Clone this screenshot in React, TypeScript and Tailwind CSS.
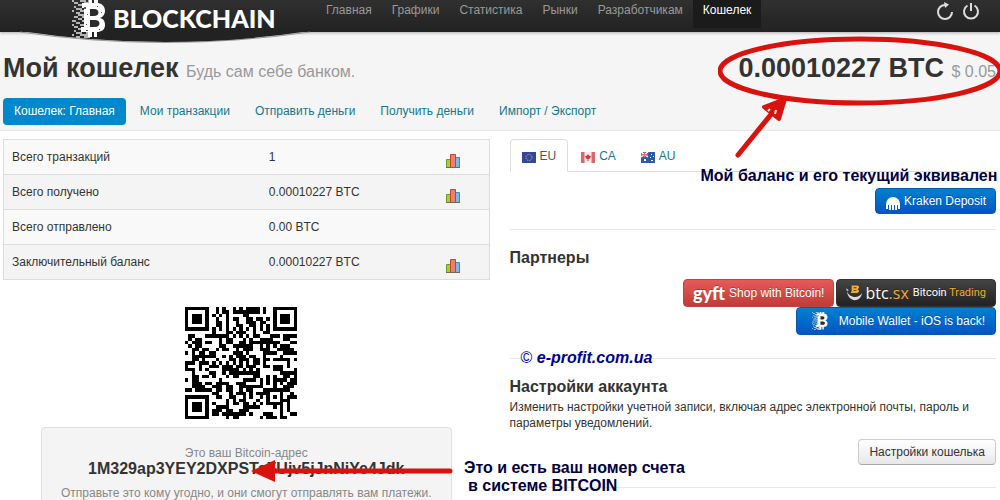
import type { ReactNode } from 'react'
import { clsx } from 'clsx'

const navItems = ['Главная', 'Графики', 'Статистика', 'Рынки', 'Разработчикам', 'Кошелек']
const walletTabs = ['Кошелек: Главная', 'Мои транзакции', 'Отправить деньги', 'Получить деньги', 'Импорт / Экспорт']

const summaryRows = [
  { label: 'Всего транзакций', value: '1', chart: true },
  { label: 'Всего получено', value: '0.00010227 BTC', chart: true },
  { label: 'Всего отправлено', value: '0.00 BTC', chart: false },
  { label: 'Заключительный баланс', value: '0.00010227 BTC', chart: true },
]

const QR_SIZE = 33

function inFinder(x: number, y: number, left: number, top: number) {
  return x >= left - 1 && x <= left + 7 && y >= top - 1 && y <= top + 7
}

function ring(x: number, y: number, cx: number, cy: number) {
  return Math.max(Math.abs(x - cx), Math.abs(y - cy))
}

function isDark(x: number, y: number) {
  const corners = [[0, 0], [QR_SIZE - 7, 0], [0, QR_SIZE - 7]]
  for (const [left, top] of corners) {
    if (inFinder(x, y, left, top)) {
      const r = ring(x, y, left + 3, top + 3)
      return r !== 2 && r !== 4
    }
  }
  const align = ring(x, y, 26, 26)
  if (align <= 2) return align !== 1
  if (x === 6 || y === 6) return (x + y) % 2 === 0
  let n = (x * 374761393 + y * 668265263 + 91) | 0
  n = Math.imul(n ^ (n >>> 13), 1274126177)
  return ((n ^ (n >>> 16)) & 255) < 132
}

function QrCode() {
  let d = ''
  for (let y = 0; y < QR_SIZE; y++) {
    for (let x = 0; x < QR_SIZE; x++) {
      if (isDark(x, y)) d += `M${x} ${y}h1v1h-1z`
    }
  }
  return (
    <svg viewBox="0 0 33 33" className="mx-auto h-28 w-28" shapeRendering="crispEdges" role="img" aria-label="QR">
      <path d={d} fill="#000" />
    </svg>
  )
}

function PixelB({ className }: { className?: string }) {
  const dots = []
  for (let y = 0; y < 19; y++) {
    for (let x = 0; x < 9; x++) {
      const n = Math.imul(x * 7919 + y * 104729 + 13, 2654435761) >>> 16
      if ((n & 15) < 5 + x) dots.push(`M${x * 2} ${y * 2}h2v2h-2z`)
    }
  }
  return (
    <svg viewBox="0 0 34 38" className={className} aria-hidden="true">
      <path d={dots.join('')} fill="#d8d8d8" opacity=".8" />
      <path d="M10 3h7V0h3v3h2V0h4v3c5 1 7 4 7 8 0 3-2 6-5 7 4 1 5 4 5 7 0 5-4 7-8 7v5h-3v-5h-2v5h-4v-5H9v-5h3V8h-2z" fill="#fff" />
      <path d="M18 9h4c6 0 6 7 0 7h-4zM18 20h5c6 0 6 7 0 7h-5z" fill="#2b2b2b" />
      <path d="M12 7h2v2h-2zM29 12h1v1h-1zM14 30h2v1h-2zM27 29h1v1h-1zM15 14h1v1h-1zM14 24h1v1h-1zM25 6h1v1h-1z" fill="#555" />
    </svg>
  )
}

function ChartIcon() {
  return (
    <svg viewBox="0 0 14 14" className="h-[14px] w-[14px]" aria-hidden="true">
      <path d="M.5 5.5h4v8h-4z" fill="#a6ce39" stroke="#6f9a1c" />
      <path d="M9.5 3.5h4v10h-4z" fill="#7db8e8" stroke="#4a86bd" />
      <path d="M4.5.5h5v13h-5z" fill="#ee7f68" stroke="#bf4433" />
      <path d="M0 13h14v1H0z" fill="#776655" />
    </svg>
  )
}

function Flag({ code }: { code: string }) {
  return (
    <svg viewBox="0 0 14 11" className="mt-[3px] h-[11px] w-[14px]" aria-hidden="true">
      {code === 'EU' && (
        <>
          <path d="M0 0h14v11H0z" fill="#33459c" />
          <circle cx="7" cy="5.5" r="3" fill="none" stroke="#c8c46a" strokeDasharray="1 .9" />
        </>
      )}
      {code === 'CA' && (
        <>
          <path d="M0 0h14v11H0z" fill="#f3eeee" />
          <path d="M0 0h3.5v11H0zM10.5 0H14v11h-3.5z" fill="#d9686a" />
          <path d="M7 2l1 1.5L10 4 9 6.5 7.5 7v2h-1V7L5 6.5 4 4l2-.5z" fill="#d4383a" />
        </>
      )}
      {code === 'AU' && (
        <>
          <path d="M0 0h14v11H0z" fill="#2c5aa8" />
          <path d="M0 0l7 5M7 0L0 5" stroke="#fff" strokeWidth="1.5" />
          <path d="M3.5 0v5.5M0 2.8h7" stroke="#e46a6a" strokeWidth="1.2" />
          <path d="M3 7h2v2H3zM10 2h1v1h-1zM12 4h1v1h-1zM9 5h1v1H9zM10 8h2v1h-2z" fill="#fff" />
        </>
      )}
    </svg>
  )
}

function PartnerButton({ className, children }: { className: string; children: ReactNode }) {
  return (
    <button type="button" className={clsx('flex items-center whitespace-nowrap rounded border text-[12px] text-white [text-shadow:0_-1px_0_rgba(0,0,0,0.25)]', className)}>
      {children}
    </button>
  )
}

function Header() {
  return (
    <header className="relative z-10 h-8 bg-gradient-to-b from-[#303030] to-[#222] shadow-[0_1px_3px_rgba(0,0,0,0.3)]">
      <svg viewBox="0 0 290 13" className="absolute left-5 top-[31px] h-[13px] w-[290px]" aria-hidden="true">
        <path d="M0 1Q145 22 290 1" fill="none" stroke="#999" strokeWidth="1" />
        <path d="M0 0Q145 22 290 0z" fill="#222" />
      </svg>
      <a href="#" className="absolute left-[72px] top-0 flex text-white" aria-label="Blockchain">
        <PixelB className="h-[38px] w-[34px]" />
        <span className="ml-[7px] mt-1 font-[Lato] text-[25px] font-black leading-7">BLOCKCHAIN</span>
      </a>
      <nav className="flex pl-[316px] text-[12px] leading-5 text-[#999]">
        {navItems.map((item) => (
          <a key={item} href="#" className={clsx('h-7 px-[10px]', item === 'Кошелек' && 'bg-[#1b1b1b] text-white')}>
            {item}
          </a>
        ))}
      </nav>
      <div className="absolute right-5 top-[2px] flex gap-2 text-[#ddd]">
        <button type="button" aria-label="Обновить">
          <svg viewBox="0 0 18 18" className="h-[18px] w-[18px]" fill="none" stroke="currentColor" strokeWidth="2">
            <path d="M9 3a7 7 0 1 0 7 7" />
            <path d="M8 0l5 2.5L9 6z" fill="currentColor" stroke="none" />
          </svg>
        </button>
        <button type="button" aria-label="Выйти">
          <svg viewBox="0 0 18 18" className="h-[18px] w-[18px]" fill="none" stroke="currentColor" strokeWidth="2">
            <path d="M5.5 3.5a7 7 0 1 0 7 0M9 1v8" />
          </svg>
        </button>
      </div>
    </header>
  )
}

function WalletHead() {
  return (
    <section className="border-b border-[#e5e5e5] bg-[#f5f5f5] pb-[5px] pl-[3px] pr-1 pt-[18px]">
      <div className="flex items-baseline justify-between">
        <h1 className="text-[27px] font-bold leading-[37px]">
          Мой кошелек <small className="text-[16px] font-normal text-[#999]">Будь сам себе банком.</small>
        </h1>
        <div className="relative text-[27px] font-bold leading-[37px]">
          0.00010227 BTC <small className="text-[16px] font-normal text-[#999]">$ 0.05</small>
          <svg viewBox="0 0 286 124" className="absolute -right-2 -top-[14px] h-[124px] w-[286px] max-w-none" fill="none" stroke="#d8120c" aria-hidden="true">
            <ellipse cx="142" cy="35" rx="140" ry="32" strokeWidth="5" />
            <path d="M20 119L55 76" strokeWidth="5" strokeLinecap="round" />
            <path d="M46 71l21-8-6 20z" fill="#d8120c" strokeWidth="4" strokeLinejoin="round" />
            <path d="M52 73l-2 2M58 74l-1 4" stroke="#f5f5f5" strokeWidth="2" />
          </svg>
        </div>
      </div>
      <nav className="mt-2 flex gap-[3px] text-[12px] leading-[27px] text-[#16778f]">
        {walletTabs.map((tab, i) => (
          <a key={tab} href="#" className={clsx('rounded px-[11px]', i === 0 && 'bg-[#0088cc] text-white')}>
            {tab}
          </a>
        ))}
      </nav>
    </section>
  )
}

function Summary() {
  return (
    <div>
      <table className="w-full border border-[#ddd] text-[12px]">
        <tbody>
          {summaryRows.map((row, i) => (
            <tr key={row.label} className={clsx('h-[35px] border-t border-[#ddd]', i % 2 ? 'bg-[#f4f4f4]' : 'bg-[#f9f9f9]')}>
              <th scope="row" className="w-[53%] px-2 text-left font-normal">{row.label}</th>
              <td className="px-2">{row.value}</td>
              <td className="w-[51px] px-2 pt-2">{row.chart && <ChartIcon />}</td>
            </tr>
          ))}
        </tbody>
      </table>
      <div className="mt-[27px] pr-[10px]">
        <QrCode />
      </div>
      <div className="relative mx-[38px] mt-2 rounded border border-[#e0e0e0] bg-[#f4f4f4] pb-5 pt-[17px] text-center text-[12px] leading-4 text-[#888]">
        <p>Это ваш Bitcoin-адрес</p>
        <p className="text-[16px] font-bold text-[#333]">1M329ap3YEY2DXPSTaFUjv5jJnNiYe4Jdk</p>
        <p className="mt-2 whitespace-nowrap">Отправьте это кому угодно, и они смогут отправлять вам платежи.</p>
        <svg viewBox="0 0 202 24" className="absolute -right-[2px] top-[31px] h-6 w-[202px]" aria-hidden="true">
          <path d="M20 12h179" stroke="#d8120c" strokeWidth="5" strokeLinecap="round" />
          <path d="M0 12L24 1v22z" fill="#d8120c" />
        </svg>
        <p className="absolute left-[422px] top-[31px] whitespace-nowrap text-left text-[16px] font-bold leading-[18px] text-[#000040]">
          Это и есть ваш номер счета
          <br />
          <span className="pl-1">в системе BITCOIN</span>
        </p>
      </div>
    </div>
  )
}

function Services() {
  return (
    <div>
      <div className="relative flex gap-px border-b border-[#ddd] text-[12px] text-[#16778f]">
        {['EU', 'CA', 'AU'].map((code) => (
          <a
            key={code}
            href="#"
            className={clsx(
              '-mb-px flex h-[33px] items-center gap-1 rounded-t border px-[11px]',
              code === 'EU' ? 'border-[#ddd] border-b-white bg-white text-[#555]' : 'border-transparent',
            )}
          >
            <Flag code={code} />
            {code}
          </a>
        ))}
        <p className="absolute left-[191px] top-7 whitespace-nowrap text-[16px] font-bold leading-[18px] text-[#000040]">
          Мой баланс и его текущий эквивален
        </p>
      </div>
      <div className="mt-4 flex justify-end">
        <PartnerButton className="h-[26px] gap-[3px] border-[#0459ae] bg-gradient-to-b from-[#0480cf] to-[#0455c4] px-[9px]">
          <svg viewBox="0 0 16 13" className="mt-1 h-[13px] w-4" fill="#fff" aria-hidden="true">
            <path d="M1 12V7a7 7 0 0 1 14 0v5h-2V8h-1v5h-2V8H9v5H7V8H6v5H4V8H3v4z" />
          </svg>
          Kraken Deposit
        </PartnerButton>
      </div>
      <hr className="mt-[15px] border-[#e8e8e8]" />
      <h3 className="mt-4 text-[16px] font-bold leading-6">Партнеры</h3>
      <div className="mt-[9px] flex flex-wrap justify-end gap-x-[2px]">
        <PartnerButton className="h-7 gap-1 border-[#b94744] bg-gradient-to-b from-[#e65a57] to-[#c03c38] px-[9px]">
          <span className="font-[Lato] text-[18px] font-black leading-5">gyft</span>
          Shop with Bitcoin!
        </PartnerButton>
        <PartnerButton className="h-7 border-[#333] bg-gradient-to-b from-[#444] to-[#222] px-[9px]">
          <svg viewBox="0 0 18 18" className="h-[18px] w-[17px]" aria-hidden="true">
            <path d="M6 1h6c3 1 2 3 0 4 3 1 2 4-1 4H5l1-2V3z" fill="#f0ad2c" />
            <path d="M8 3h3v1H8zM8 6h3v1H8z" fill="#333" />
            <path d="M1 7c2 7 12 9 16 2-2 11-15 10-16-2zM0 4l3 2-2 1z" fill="#ddd" />
          </svg>
          <span className="ml-[2px] font-['Open_Sans'] text-[16px] leading-6">btc<span className="text-[#f0ad2c]">.sx</span></span>
          <span className="ml-1 font-[Roboto] text-[11px]">Bitcoin <span className="text-[#f0ad2c]">Trading</span></span>
        </PartnerButton>
        <PartnerButton className="h-7 gap-[11px] border-[#0459ae] bg-gradient-to-b from-[#0480cf] to-[#0455c4] pl-[15px] pr-[10px]">
          <PixelB className="h-[18px] w-4" />
          Mobile Wallet - iOS is back!
        </PartnerButton>
      </div>
      <div className="relative mt-[23px]">
        <hr className="border-[#e8e8e8]" />
        <p className="absolute -top-[10px] left-[11px] bg-white text-[16px] font-bold italic leading-5 text-[#000090]">
          <span className="font-normal not-italic">©</span> e-profit.com.ua
        </p>
      </div>
      <h3 className="mt-4 text-[16px] font-bold leading-6">Настройки аккаунта</h3>
      <p className="text-[12px] leading-4">
        Изменить настройки учетной записи, включая адрес электронной почты, пароль и параметры уведомлений.
      </p>
      <div className="mt-2 flex justify-end">
        <button type="button" className="h-[26px] rounded border border-[#ccc] border-b-[#aaa] bg-gradient-to-b from-white to-[#e8e8e8] px-[10px] text-[12px]">
          Настройки кошелька
        </button>
      </div>
      <hr className="mt-[22px] border-[#e8e8e8]" />
    </div>
  )
}

export default function App() {
  return (
    <div className="h-screen overflow-hidden bg-white font-['Liberation_Sans',Arial,sans-serif] text-[#333]">
      <Header />
      <WalletHead />
      <main className="grid grid-cols-2 gap-5 pl-[3px] pr-1 pt-2">
        <Summary />
        <Services />
      </main>
    </div>
  )
}
